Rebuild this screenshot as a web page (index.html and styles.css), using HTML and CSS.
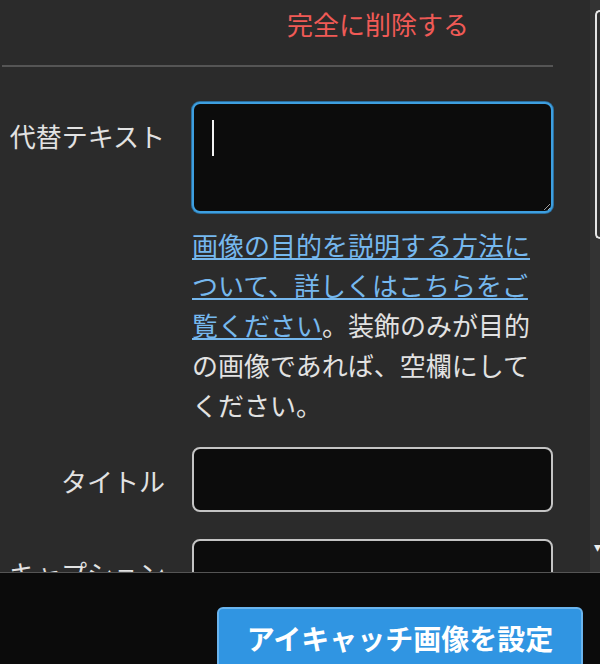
FILE: index.html
```html
<!DOCTYPE html>
<html lang="ja">
<head>
    <meta charset="UTF-8">
    <meta name="viewport" content="width=device-width, initial-scale=1.0">
    <title>アイキャッチ画像</title>
    <link rel="stylesheet" href="styles.css">
</head>
<body>
    <div class="panel">
        <div class="details">
            <div class="actions">
                <a href="#" class="delete">完全に削除する</a>
            </div>
            <hr class="divider">

            <div class="setting">
                <label class="label" for="alt">代替テキスト</label>
                <div class="field">
                    <div class="alt-wrap">
                        <textarea id="alt" class="alt-text"></textarea>
                        <span class="caret"></span>
                    </div>
                    <p class="help"><a href="#" class="help-link">画像の目的を説明する方法について、詳しくはこちらをご覧ください</a>。装飾のみが目的の画像であれば、空欄にしてください。</p>
                </div>
            </div>

            <div class="setting">
                <label class="label" for="title">タイトル</label>
                <div class="field">
                    <input id="title" class="text-input" type="text">
                </div>
            </div>

            <div class="setting">
                <label class="label" for="caption">キャプション</label>
                <div class="field">
                    <textarea id="caption" class="text-input caption"></textarea>
                </div>
            </div>
        </div>

        <!-- scrollbar of the sidebar -->
        <div class="scrollbar">
            <div class="thumb"></div>
            <div class="arrow">&#9662;</div>
        </div>
    </div>

    <div class="toolbar">
        <button class="button-primary">アイキャッチ画像を設定</button>
    </div>
</body>
</html>
```

FILE: styles.css
```css
body {
    margin: 0;
    background: #2b2b2b;
    color: #e2e2e2;
    font-family: "Noto Sans CJK JP", "Noto Sans", sans-serif;
    font-size: 26px;
    overflow: hidden;
}
.panel {
    display: flex;
    height: 572px;
    overflow: hidden;
    border-bottom: 1px solid #555;
}
.details {
    width: 553px;
    flex-shrink: 0;
}
.actions {
    padding: 4px 0 0 287px;
    line-height: 40px;
}
.delete {
    color: #f05a56;
    text-decoration: none;
}
.divider {
    margin: 21px 0 35px 2px;
    border: 0;
    border-top: 2px solid #555;
}
.setting {
    display: flex;
    gap: 27px;
    margin-bottom: 27px;
}
.label {
    width: 165px;
    flex-shrink: 0;
    text-align: right;
    line-height: 40px;
    padding-top: 14px;
    white-space: nowrap;
}
.field {
    flex: 1;
}
.alt-wrap {
    position: relative;
}
.caret {
    position: absolute;
    left: 20px;
    top: 18px;
    width: 2px;
    height: 36px;
    background: #f2f2f2;
}
.alt-text,
.text-input {
    display: block;
    box-sizing: border-box;
    width: 100%;
    margin: 0;
    background: #0c0c0c;
    color: #fff;
    border: 2px solid #c4c4c4;
    border-radius: 8px;
    font: inherit;
    outline: none;
}
.alt-text {
    height: 111px;
    border-color: #3e9fe0;
    box-shadow: 0 0 0 1px #2b6f9f;
    resize: vertical;
    padding: 8px 18px;
}
.text-input {
    height: 65px;
}
.caption {
    height: 110px;
    resize: none;
}
.help {
    margin: 12px 0 -5px;
    line-height: 40px;
    padding-right: 10px;
}
.help-link {
    color: #76b8ee;
}
.scrollbar {
    margin-left: 37px;
    flex: 1;
    background: #333;
    position: relative;
}
.thumb {
    margin: 10px 0 0 5px;
    height: 225px;
    border: 2px solid #e8e8e8;
    border-right: 0;
    border-radius: 6px 0 0 6px;
}
.arrow {
    position: absolute;
    left: 4px;
    top: 536px;
    font-size: 14px;
    color: #eee;
}
.toolbar {
    background: #0b0b0b;
    height: 91px;
    padding: 34px 17px 0 217px;
    box-sizing: border-box;
}
.button-primary {
    width: 366px;
    height: 62px;
    background: #3095e2;
    color: #fff;
    border: 2px solid #6ab4ee;
    border-radius: 6px;
    font-family: "Noto Sans CJK JP", "Noto Sans", sans-serif;
    font-size: 28px;
    font-weight: bold;
    padding: 0;
    line-height: 56px;
    text-align: center;
}
```
